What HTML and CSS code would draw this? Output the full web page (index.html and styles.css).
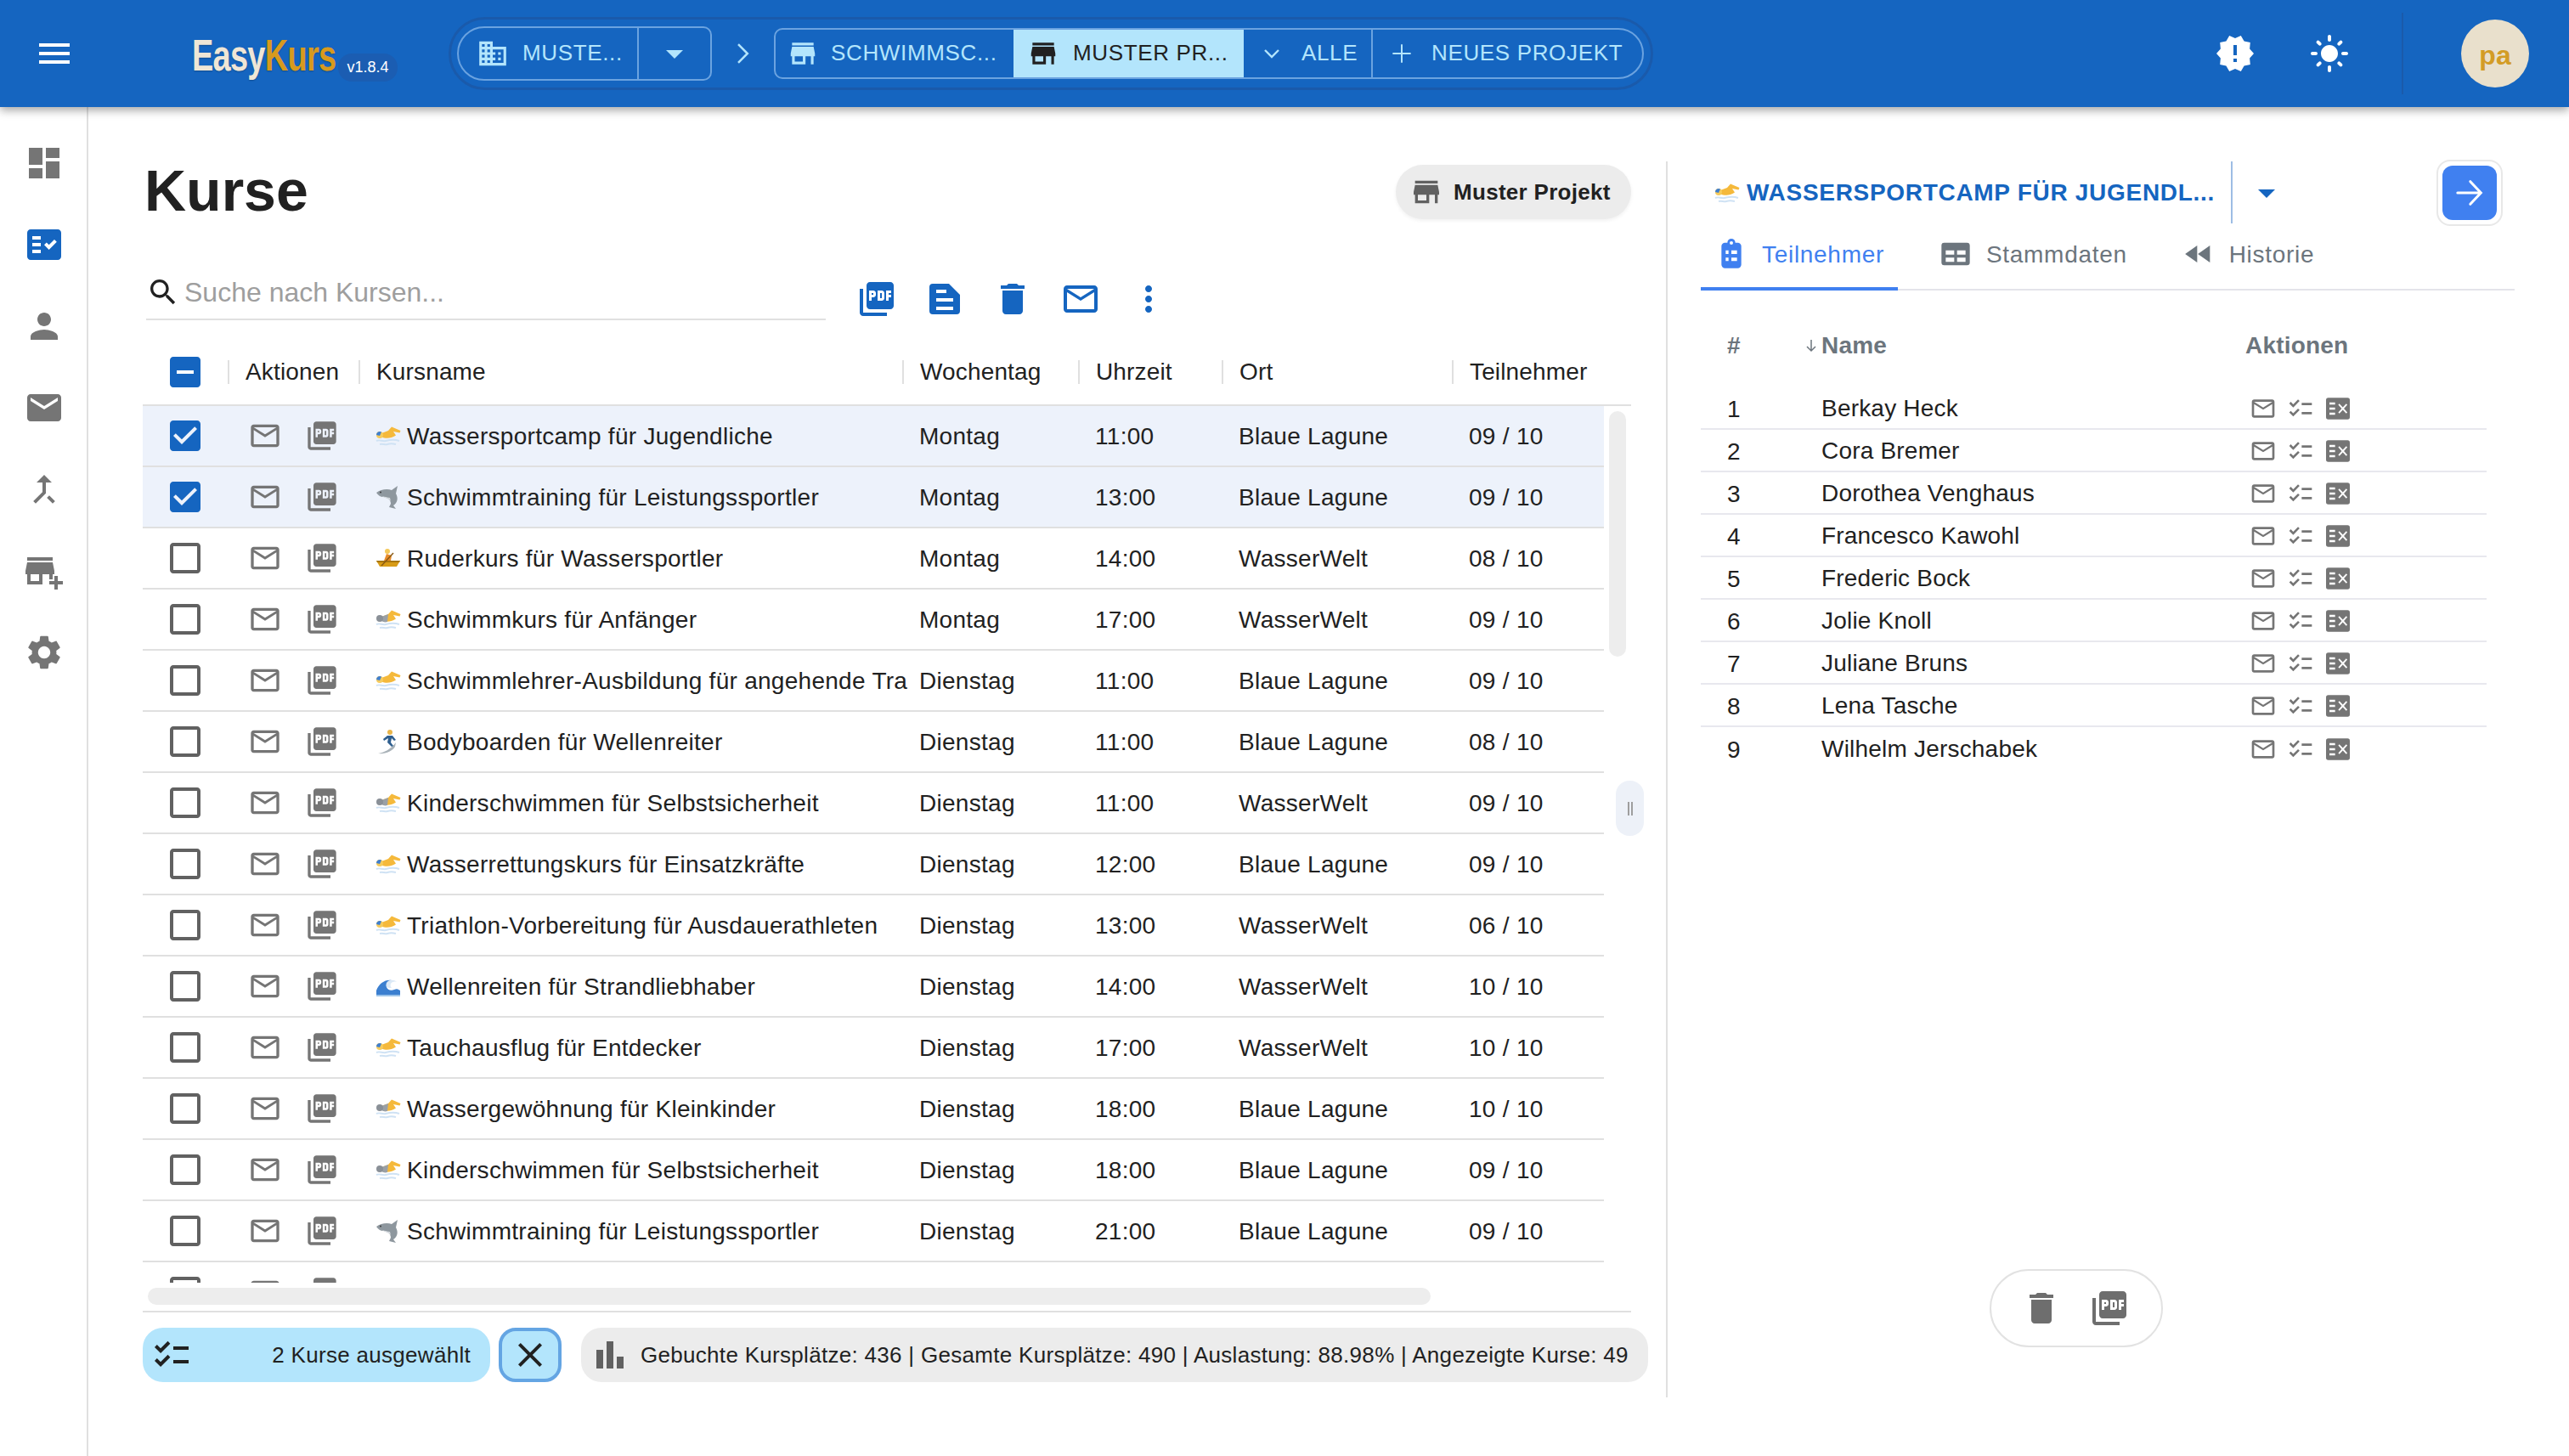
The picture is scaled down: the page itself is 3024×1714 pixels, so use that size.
FILE: index.html
```html
<!DOCTYPE html>
<html lang="de">
<head>
	<title>EasyKurs</title>
	<meta charset="utf-8">
	<link rel="stylesheet" href="styles.css">
</head>
<body>
<svg class="defs" xmlns="http://www.w3.org/2000/svg">
	<symbol id="menu" viewBox="0 0 24 24"><path d="M3 18h18v-2H3v2zm0-5h18v-2H3v2zm0-7v2h18V6H3z"/></symbol>
	<symbol id="dashboard" viewBox="0 0 24 24"><path d="M3 13h8V3H3v10zm0 8h8v-6H3v6zm10 0h8V11h-8v10zm0-18v6h8V3h-8z"/></symbol>
	<symbol id="fact" viewBox="0 0 24 24"><path d="M20 3H4c-1.1 0-2 .9-2 2v14c0 1.1.9 2 2 2h16c1.1 0 2-.9 2-2V5c0-1.1-.9-2-2-2zM10 17H5v-2h5v2zm0-4H5v-2h5v2zm0-4H5V7h5v2zm4.82 6L12 12.16l1.41-1.41 1.41 1.42L17.99 9l1.42 1.42L14.82 15z"/></symbol>
	<symbol id="person" viewBox="0 0 24 24"><path d="M12 12c2.21 0 4-1.79 4-4s-1.79-4-4-4-4 1.79-4 4 1.79 4 4 4zm0 2c-2.67 0-8 1.34-8 4v2h16v-2c0-2.66-5.33-4-8-4z"/></symbol>
	<symbol id="email" viewBox="0 0 24 24"><path d="M20 4H4c-1.1 0-1.99.9-1.99 2L2 18c0 1.1.9 2 2 2h16c1.1 0 2-.9 2-2V6c0-1.1-.9-2-2-2zm0 4l-8 5-8-5V6l8 5 8-5v2z"/></symbol>
	<symbol id="merge" viewBox="0 0 24 24"><path d="M17 20.41 18.41 19 15 15.59 13.59 17 17 20.41zM7.5 8H11v5.59L5.59 19 7 20.41l6-6V8h3.5L12 3.5 7.5 8z"/></symbol>
	<symbol id="addbiz" viewBox="0 0 24 24"><path d="M15 17h2v-3h1v-2l-1-5H2l-1 5v2h1v6h9v-6h4v3zm-6 1H4v-4h5v4zM2 4h15v2H2zM20 18v-3h-2v3h-3v2h3v3h2v-3h3v-2z"/></symbol>
	<symbol id="settings" viewBox="0 0 24 24"><path d="M19.14 12.94c.04-.3.06-.61.06-.94 0-.32-.02-.64-.07-.94l2.03-1.58c.18-.14.23-.41.12-.61l-1.92-3.32c-.12-.22-.37-.29-.59-.22l-2.39.96c-.5-.38-1.03-.7-1.62-.94l-.36-2.54c-.04-.24-.24-.41-.48-.41h-3.84c-.24 0-.43.17-.47.41l-.36 2.54c-.59.24-1.13.57-1.62.94l-2.39-.96c-.22-.08-.47 0-.59.22L2.74 8.87c-.12.21-.08.47.12.61l2.03 1.58c-.05.3-.09.63-.09.94s.02.64.07.94l-2.03 1.58c-.18.14-.23.41-.12.61l1.92 3.32c.12.22.37.29.59.22l2.39-.96c.5.38 1.03.7 1.62.94l.36 2.54c.05.24.24.41.48.41h3.84c.24 0 .44-.17.47-.41l.36-2.54c.59-.24 1.13-.56 1.62-.94l2.39.96c.22.08.47 0 .59-.22l1.92-3.32c.12-.22.07-.47-.12-.61l-2.01-1.58zM12 15.6c-1.98 0-3.6-1.62-3.6-3.6s1.62-3.6 3.6-3.6 3.6 1.62 3.6 3.6-1.62 3.6-3.6 3.6z"/></symbol>
	<symbol id="store" viewBox="0 0 24 24"><path d="M20 4H4v2h16V4zm1 10v-2l-1-5H4l-1 5v2h1v6h10v-6h4v6h2v-6h1zm-9 4H6v-4h6v4z"/></symbol>
	<symbol id="domain" viewBox="0 0 24 24"><path d="M12 7V3H2v18h20V7H12zM6 19H4v-2h2v2zm0-4H4v-2h2v2zm0-4H4V9h2v2zm0-4H4V5h2v2zm4 12H8v-2h2v2zm0-4H8v-2h2v2zm0-4H8V9h2v2zm0-4H8V5h2v2zm10 12h-8v-2h2v-2h-2v-2h2v-2h-2V9h8v10zm-2-8h-2v2h2v-2zm0 4h-2v2h2v-2z"/></symbol>
	<symbol id="drop" viewBox="0 0 24 24"><path d="M7 10l5 5 5-5z"/></symbol>
	<symbol id="chev" viewBox="0 0 24 24"><path d="M9 5.5l6.5 6.5L9 18.500" fill="none" stroke="currentColor" stroke-width="1.500"/></symbol>
	<symbol id="chevdown" viewBox="0 0 24 24"><path d="M6 9l6 6 6-6" fill="none" stroke="currentColor" stroke-width="1.800"/></symbol>
	<symbol id="plus" viewBox="0 0 24 24"><path d="M12 4v16M4 12h16" fill="none" stroke="currentColor" stroke-width="1.500"/></symbol>
	<symbol id="pdf" viewBox="0 0 24 24"><path d="M20 2H8c-1.1 0-2 .9-2 2v12c0 1.1.9 2 2 2h12c1.1 0 2-.9 2-2V4c0-1.1-.9-2-2-2zm-8.500 7.500c0 .83-.67 1.500-1.500 1.500H9v2H7.500V7H10c.83 0 1.500.67 1.500 1.500v1zm5 2c0 .83-.67 1.500-1.500 1.500h-2.500V7H15c.83 0 1.500.67 1.500 1.500v3zm4-3H19v1h1.500V11H19v2h-1.500V7h3v1.500zM9 9.500h1v-1H9v1zM4 6H2v14c0 1.100.9 2 2 2h14v-2H4V6zm10 5.500h1v-3h-1v3z"/></symbol>
	<symbol id="doc" viewBox="0 0 24 24"><path fill-rule="evenodd" d="M5 3h9.500L21 9.500V19a2 2 0 0 1-2 2H5a2 2 0 0 1-2-2V5a2 2 0 0 1 2-2zm2 3.500v2h6v-2zm0 5v2h10v-2zm0 5v2h10v-2z"/></symbol>
	<symbol id="trash" viewBox="0 0 24 24"><path d="M6 19c0 1.100.9 2 2 2h8c1.100 0 2-.9 2-2V7H6v12zM19 4h-3.500l-1-1h-5l-1 1H5v2h14V4z"/></symbol>
	<symbol id="mail" viewBox="0 0 24 24"><path d="M20 4H4c-1.100 0-1.990.9-1.990 2L2 18c0 1.100.9 2 2 2h16c1.100 0 2-.9 2-2V6c0-1.100-.9-2-2-2zm0 14H4V8l8 5 8-5v10zm-8-7L4 6h16l-8 5z"/></symbol>
	<symbol id="more" viewBox="0 0 24 24"><path d="M12 8c1.100 0 2-.9 2-2s-.9-2-2-2-2 .9-2 2 .9 2 2 2zm0 2c-1.100 0-2 .9-2 2s.9 2 2 2 2-.9 2-2-.9-2-2-2zm0 6c-1.100 0-2 .9-2 2s.9 2 2 2 2-.9 2-2-.9-2-2-2z"/></symbol>
	<symbol id="search" viewBox="0 0 24 24"><path d="M15.500 14h-.79l-.28-.27C15.410 12.590 16 11.110 16 9.500 16 5.910 13.090 3 9.500 3S3 5.910 3 9.500 5.910 16 9.500 16c1.610 0 3.090-.59 4.230-1.570l.27.28v.79l5 4.990L20.490 19l-4.990-5zm-6 0C7.010 14 5 11.990 5 9.500S7.010 5 9.500 5 14 7.010 14 9.500 11.990 14 9.500 14z"/></symbol>
	<symbol id="cb-on" viewBox="0 0 24 24"><path d="M19 3H5c-1.110 0-2 .9-2 2v14c0 1.100.89 2 2 2h14c1.110 0 2-.9 2-2V5c0-1.100-.89-2-2-2zm-9 14l-5-5 1.410-1.410L10 14.170l7.590-7.590L19 8l-9 9z"/></symbol>
	<symbol id="cb-off" viewBox="0 0 24 24"><path d="M19 5v14H5V5h14m0-2H5c-1.100 0-2 .9-2 2v14c0 1.100.9 2 2 2h14c1.100 0 2-.9 2-2V5c0-1.100-.9-2-2-2z"/></symbol>
	<symbol id="cb-some" viewBox="0 0 24 24"><path d="M19 3H5c-1.100 0-2 .9-2 2v14c0 1.100.9 2 2 2h14c1.100 0 2-.9 2-2V5c0-1.100-.9-2-2-2zm-2 10H7v-2h10v2z"/></symbol>
	<symbol id="alert" viewBox="0 0 24 24"><path d="M23 12l-2.440-2.780.34-3.680-3.610-.82-1.890-3.180L12 3 8.600 1.540 6.710 4.720l-3.610.81.34 3.680L1 12l2.440 2.780-.34 3.690 3.610.82 1.890 3.180L12 21l3.400 1.460 1.890-3.180 3.610-.82-.34-3.680L23 12zm-10 5h-2v-2h2v2zm0-4h-2V7h2v6z"/></symbol>
	<symbol id="sun" viewBox="0 0 24 24"><path d="M12 7c-2.760 0-5 2.240-5 5s2.240 5 5 5 5-2.240 5-5-2.240-5-5-5zM2 13h2c.55 0 1-.45 1-1s-.45-1-1-1H2c-.55 0-1 .45-1 1s.45 1 1 1zm18 0h2c.55 0 1-.45 1-1s-.45-1-1-1h-2c-.55 0-1 .45-1 1s.45 1 1 1zM11 2v2c0 .55.45 1 1 1s1-.45 1-1V2c0-.55-.45-1-1-1s-1 .45-1 1zm0 18v2c0 .55.45 1 1 1s1-.45 1-1v-2c0-.55-.45-1-1-1s-1 .45-1 1zM5.990 4.580c-.39-.39-1.030-.39-1.410 0-.39.39-.39 1.030 0 1.410l1.060 1.060c.39.39 1.030.39 1.410 0s.39-1.030 0-1.410L5.990 4.580zm12.370 12.370c-.39-.39-1.030-.39-1.410 0-.39.39-.39 1.030 0 1.410l1.060 1.060c.39.39 1.030.39 1.410 0 .39-.39.39-1.030 0-1.410l-1.060-1.060zm1.060-10.960c.39-.39.39-1.030 0-1.410-.39-.39-1.030-.39-1.410 0l-1.060 1.060c-.39.39-.39 1.030 0 1.410s1.030.39 1.410 0l1.060-1.060zM7.050 18.360c.39-.39.39-1.030 0-1.410-.39-.39-1.030-.39-1.410 0l-1.060 1.060c-.39.39-.39 1.030 0 1.410s1.030.39 1.410 0l1.060-1.060z"/></symbol>
	<symbol id="checklist" viewBox="0 0 24 24"><path d="M22 7h-9v2h9V7zm0 8h-9v2h9v-2zM5.540 11L2 7.460l1.410-1.410 2.120 2.120 4.240-4.240 1.410 1.410L5.540 11zm0 8L2 15.460l1.410-1.410 2.120 2.120 4.240-4.240 1.410 1.410L5.540 19z"/></symbol>
	<symbol id="rulex" viewBox="0 0 24 24"><path fill-rule="evenodd" d="M3.500 2.500h17a2 2 0 0 1 2 2v15a2 2 0 0 1-2 2h-17a2 2 0 0 1-2-2v-15a2 2 0 0 1 2-2zM4.500 6.500v2h5v-2zm0 4.500v2h5v-2zm0 4.500v2h5v-2zM13.300 7.600l-1 1 3 3.400-3 3.400 1 1 3-3.300 3 3.300 1-1-3-3.400 3-3.400-1-1-3 3.300z"/></symbol>
	<symbol id="close" viewBox="0 0 24 24"><path d="M19 6.410L17.590 5 12 10.590 6.410 5 5 6.410 10.590 12 5 17.590 6.410 19 12 13.410 17.590 19 19 17.590 13.410 12z"/></symbol>
	<symbol id="bars" viewBox="0 0 24 24"><path d="M4 9h4v11H4zM16 13h4v7h-4zM10 4h4v16h-4z"/></symbol>
	<symbol id="arrow" viewBox="0 0 24 24"><path d="M3.500 12h16M12.500 4l7.500 8-7.500 8" fill="none" stroke="currentColor" stroke-width="1.800" stroke-linecap="round"/></symbol>
	<symbol id="down" viewBox="0 0 16 16"><path d="M8 1v13M3 9l5 5 5-5" fill="none" stroke="currentColor" stroke-width="1.500"/></symbol>
	<symbol id="clip" viewBox="0 0 24 24"><path fill-rule="evenodd" d="M16.500 4H14.800a2.800 2.800 0 0 0-5.600 0H7.500A2.500 2.500 0 0 0 5 6.500v13A2.500 2.500 0 0 0 7.500 22h9a2.500 2.500 0 0 0 2.500-2.500v-13A2.500 2.500 0 0 0 16.500 4zM12 3a1.200 1.200 0 1 1 0 2.400A1.200 1.200 0 0 1 12 3zM8 9.500v2.500h2V9.500zM12 9.500v2.500h4V9.500zM8 14.500V17h2v-2.500zM12 14.500V17h4v-2.500z"/></symbol>
	<symbol id="table" viewBox="0 0 24 24"><path fill-rule="evenodd" d="M4 4h16a2 2 0 0 1 2 2v12a2 2 0 0 1-2 2H4a2 2 0 0 1-2-2V6a2 2 0 0 1 2-2zM5 9.500v3h6v-3zM13 9.500v3h6v-3zM5 14.500v3h6v-3zM13 14.500v3h6v-3z"/></symbol>
	<symbol id="rewind" viewBox="0 0 24 24"><path d="M11 18V6l-8.500 6 8.500 6zm.5-6l8.500 6V6l-8.500 6z"/></symbol>
	<symbol id="e-swim" viewBox="0 0 30 30">
		<path d="M1 21c4-2 7 1 11 0s10-2 16 0M5 25c4-1 6 1 9 0s6-1 10 0" fill="none" stroke="#cfe2f4" stroke-width="2"/>
		<path d="M7 12l8-3 4-4.500 10.500 4.500-1 2.500-7.500-1.500 3 4.500c-6 4-12 4-17 2z" fill="#f5b93b"/>
		<circle cx="5" cy="14" r="4" fill="#f6cb5c"/>
		<path d="M1 14a4 4 0 0 1 6-3.500l-2 4.500z" fill="#3f7fcf"/>
	</symbol>
	<symbol id="e-swimgrey" viewBox="0 0 30 30">
		<path d="M1 21c4-2 7 1 11 0s10-2 16 0M5 25c4-1 6 1 9 0s6-1 10 0" fill="none" stroke="#cfe2f4" stroke-width="2"/>
		<path d="M7 12l8-3 4-4.500 10.500 4.500-1 2.500-7.500-1.500 3 4.500c-6 4-12 4-17 2z" fill="#f5b93b"/>
		<path d="M7 12l8-3-1 9c-3 1-5 0-7-1z" fill="#9aa0a6"/>
		<circle cx="5" cy="14" r="4" fill="#8a9097"/>
	</symbol>
	<symbol id="e-shark" viewBox="0 0 30 30">
		<path d="M1 10c5-4 13-5 18-3l7-5-2 9c3 5 2 11-3 14l3 4-8-2 2-4c0-5-4-8-9-8-3 0-6-2-8-5z" fill="#8e979e"/>
		<path d="M4 12c4 3 9 3 13 4l1 4c-2-3-8-4-14-8z" fill="#d5dade"/>
		<circle cx="6" cy="9.500" r=".9" fill="#333"/>
	</symbol>
	<symbol id="e-row" viewBox="0 0 30 30">
		<path d="M1 18h28l-4 7H5z" fill="#d89b16"/>
		<path d="M1 18h28l-1 2H2z" fill="#a8760e"/>
		<path d="M10 18l3-8 6 2-1 6z" fill="#e88a2a"/>
		<circle cx="14" cy="7" r="3" fill="#f4c95a"/>
		<path d="M7 24L21 9" stroke="#8a5a14" stroke-width="1.500"/>
	</symbol>
	<symbol id="e-surf" viewBox="0 0 30 30">
		<path d="M3 29c7-1 15-5 21-13l-1 5c-3 5-11 9-20 8z" fill="#a9b2b8"/>
		<circle cx="17" cy="4" r="3" fill="#e8b54a"/>
		<path d="M14 8l6 0 4 5-2 1-3-3-1 5 3 4-2 1-5-5 1-5-5 3-1-2z" fill="#2f5f8f"/>
	</symbol>
	<symbol id="e-wave" viewBox="0 0 30 30">
		<path d="M1 27V20c3-8 10-13 18-12-5 1-7 5-6 8s5 5 9 3 5 0 7 1v7z" fill="#3b7fd0"/>
		<path d="M13 16c-2-6 3-9 8-8 2 0 3 1 4 2-3-1-6 0-7 2s0 4 1 5c-2 0-4 0-6-1z" fill="#dbe9f6"/>
		<path d="M1 25h28v2H1z" fill="#9cc4ea"/>
	</symbol>
</svg>

<header class="topbar">
	<svg class="ic s48 burger"><use href="#menu"/></svg>
	<div class="logo"><span class="logo-easy">Easy</span><span class="logo-kurs">Kurs</span></div>
	<div class="version">v1.8.4</div>
	<nav class="crumbs">
		<div class="group group-org">
			<div class="tbtn tbtn-org"><svg class="ic s38"><use href="#domain"/></svg><span>MUSTE...</span></div>
			<div class="tbtn tbtn-drop"><svg class="ic s48"><use href="#drop"/></svg></div>
		</div>
		<svg class="ic s40 crumb-sep"><use href="#chev"/></svg>
		<div class="group group-projects">
			<div class="tbtn tbtn-a"><svg class="ic s38"><use href="#store"/></svg><span>SCHWIMMSC...</span></div>
			<div class="tbtn tbtn-b active"><svg class="ic s38"><use href="#store"/></svg><span>MUSTER PR...</span></div>
			<div class="tbtn tbtn-c"><svg class="ic s32"><use href="#chevdown"/></svg><span>ALLE</span></div>
			<div class="tbtn tbtn-d"><svg class="ic s32"><use href="#plus"/></svg><span>NEUES PROJEKT</span></div>
		</div>
	</nav>
	<div class="top-right">
		<svg class="ic s48"><use href="#alert"/></svg>
		<svg class="ic s48 sun"><use href="#sun"/></svg>
		<div class="top-sep"></div>
		<div class="avatar">pa</div>
	</div>
</header>

<div class="page">
	<aside class="rail">
		<svg class="ic s48"><use href="#dashboard"/></svg>
		<svg class="ic s48 on"><use href="#fact"/></svg>
		<svg class="ic s48"><use href="#person"/></svg>
		<svg class="ic s48"><use href="#email"/></svg>
		<svg class="ic s48"><use href="#merge"/></svg>
		<svg class="ic s48"><use href="#addbiz"/></svg>
		<svg class="ic s48"><use href="#settings"/></svg>
	</aside>

	<main class="left">
		<div class="title-row">
			<h1>Kurse</h1>
			<div class="project-chip"><svg class="ic s40"><use href="#store"/></svg><span>Muster Projekt</span></div>
		</div>
		<div class="toolbar">
			<div class="search">
				<svg class="ic s40"><use href="#search"/></svg>
				<span>Suche nach Kursen...</span>
			</div>
			<div class="tools">
				<svg class="ic s48"><use href="#pdf"/></svg>
				<svg class="ic s48"><use href="#doc"/></svg>
				<svg class="ic s48"><use href="#trash"/></svg>
				<svg class="ic s48"><use href="#mail"/></svg>
				<svg class="ic s48"><use href="#more"/></svg>
			</div>
		</div>

		<div class="table">
			<div class="thead">
				<div class="hcheck"><svg class="ic s48 blue"><use href="#cb-some"/></svg></div>
				<div class="hcell">Aktionen</div>
				<div class="hcell">Kursname</div>
				<div class="hcell">Wochentag</div>
				<div class="hcell">Uhrzeit</div>
				<div class="hcell">Ort</div>
				<div class="hcell">Teilnehmer</div>
			</div>
			<div class="tbody">
				<div class="row selected">
					<div class="c-check"><svg class="ic s48 blue"><use href="#cb-on"/></svg></div>
					<div class="c-act"><svg class="ic s40"><use href="#mail"/></svg><svg class="ic s40"><use href="#pdf"/></svg></div>
					<div class="c-name"><svg class="emoji"><use href="#e-swim"/></svg><span>Wassersportcamp für Jugendliche</span></div>
					<div class="cell">Montag</div><div class="cell">11:00</div><div class="cell">Blaue Lagune</div><div class="cell">09 / 10</div>
				</div>
				<div class="row selected">
					<div class="c-check"><svg class="ic s48 blue"><use href="#cb-on"/></svg></div>
					<div class="c-act"><svg class="ic s40"><use href="#mail"/></svg><svg class="ic s40"><use href="#pdf"/></svg></div>
					<div class="c-name"><svg class="emoji"><use href="#e-shark"/></svg><span>Schwimmtraining für Leistungssportler</span></div>
					<div class="cell">Montag</div><div class="cell">13:00</div><div class="cell">Blaue Lagune</div><div class="cell">09 / 10</div>
				</div>
				<div class="row">
					<div class="c-check"><svg class="ic s48"><use href="#cb-off"/></svg></div>
					<div class="c-act"><svg class="ic s40"><use href="#mail"/></svg><svg class="ic s40"><use href="#pdf"/></svg></div>
					<div class="c-name"><svg class="emoji"><use href="#e-row"/></svg><span>Ruderkurs für Wassersportler</span></div>
					<div class="cell">Montag</div><div class="cell">14:00</div><div class="cell">WasserWelt</div><div class="cell">08 / 10</div>
				</div>
				<div class="row">
					<div class="c-check"><svg class="ic s48"><use href="#cb-off"/></svg></div>
					<div class="c-act"><svg class="ic s40"><use href="#mail"/></svg><svg class="ic s40"><use href="#pdf"/></svg></div>
					<div class="c-name"><svg class="emoji"><use href="#e-swimgrey"/></svg><span>Schwimmkurs für Anfänger</span></div>
					<div class="cell">Montag</div><div class="cell">17:00</div><div class="cell">WasserWelt</div><div class="cell">09 / 10</div>
				</div>
				<div class="row">
					<div class="c-check"><svg class="ic s48"><use href="#cb-off"/></svg></div>
					<div class="c-act"><svg class="ic s40"><use href="#mail"/></svg><svg class="ic s40"><use href="#pdf"/></svg></div>
					<div class="c-name"><svg class="emoji"><use href="#e-swim"/></svg><span>Schwimmlehrer-Ausbildung für angehende Tra</span></div>
					<div class="cell">Dienstag</div><div class="cell">11:00</div><div class="cell">Blaue Lagune</div><div class="cell">09 / 10</div>
				</div>
				<div class="row">
					<div class="c-check"><svg class="ic s48"><use href="#cb-off"/></svg></div>
					<div class="c-act"><svg class="ic s40"><use href="#mail"/></svg><svg class="ic s40"><use href="#pdf"/></svg></div>
					<div class="c-name"><svg class="emoji"><use href="#e-surf"/></svg><span>Bodyboarden für Wellenreiter</span></div>
					<div class="cell">Dienstag</div><div class="cell">11:00</div><div class="cell">Blaue Lagune</div><div class="cell">08 / 10</div>
				</div>
				<div class="row">
					<div class="c-check"><svg class="ic s48"><use href="#cb-off"/></svg></div>
					<div class="c-act"><svg class="ic s40"><use href="#mail"/></svg><svg class="ic s40"><use href="#pdf"/></svg></div>
					<div class="c-name"><svg class="emoji"><use href="#e-swimgrey"/></svg><span>Kinderschwimmen für Selbstsicherheit</span></div>
					<div class="cell">Dienstag</div><div class="cell">11:00</div><div class="cell">WasserWelt</div><div class="cell">09 / 10</div>
				</div>
				<div class="row">
					<div class="c-check"><svg class="ic s48"><use href="#cb-off"/></svg></div>
					<div class="c-act"><svg class="ic s40"><use href="#mail"/></svg><svg class="ic s40"><use href="#pdf"/></svg></div>
					<div class="c-name"><svg class="emoji"><use href="#e-swim"/></svg><span>Wasserrettungskurs für Einsatzkräfte</span></div>
					<div class="cell">Dienstag</div><div class="cell">12:00</div><div class="cell">Blaue Lagune</div><div class="cell">09 / 10</div>
				</div>
				<div class="row">
					<div class="c-check"><svg class="ic s48"><use href="#cb-off"/></svg></div>
					<div class="c-act"><svg class="ic s40"><use href="#mail"/></svg><svg class="ic s40"><use href="#pdf"/></svg></div>
					<div class="c-name"><svg class="emoji"><use href="#e-swim"/></svg><span>Triathlon-Vorbereitung für Ausdauerathleten</span></div>
					<div class="cell">Dienstag</div><div class="cell">13:00</div><div class="cell">WasserWelt</div><div class="cell">06 / 10</div>
				</div>
				<div class="row">
					<div class="c-check"><svg class="ic s48"><use href="#cb-off"/></svg></div>
					<div class="c-act"><svg class="ic s40"><use href="#mail"/></svg><svg class="ic s40"><use href="#pdf"/></svg></div>
					<div class="c-name"><svg class="emoji"><use href="#e-wave"/></svg><span>Wellenreiten für Strandliebhaber</span></div>
					<div class="cell">Dienstag</div><div class="cell">14:00</div><div class="cell">WasserWelt</div><div class="cell">10 / 10</div>
				</div>
				<div class="row">
					<div class="c-check"><svg class="ic s48"><use href="#cb-off"/></svg></div>
					<div class="c-act"><svg class="ic s40"><use href="#mail"/></svg><svg class="ic s40"><use href="#pdf"/></svg></div>
					<div class="c-name"><svg class="emoji"><use href="#e-swim"/></svg><span>Tauchausflug für Entdecker</span></div>
					<div class="cell">Dienstag</div><div class="cell">17:00</div><div class="cell">WasserWelt</div><div class="cell">10 / 10</div>
				</div>
				<div class="row">
					<div class="c-check"><svg class="ic s48"><use href="#cb-off"/></svg></div>
					<div class="c-act"><svg class="ic s40"><use href="#mail"/></svg><svg class="ic s40"><use href="#pdf"/></svg></div>
					<div class="c-name"><svg class="emoji"><use href="#e-swimgrey"/></svg><span>Wassergewöhnung für Kleinkinder</span></div>
					<div class="cell">Dienstag</div><div class="cell">18:00</div><div class="cell">Blaue Lagune</div><div class="cell">10 / 10</div>
				</div>
				<div class="row">
					<div class="c-check"><svg class="ic s48"><use href="#cb-off"/></svg></div>
					<div class="c-act"><svg class="ic s40"><use href="#mail"/></svg><svg class="ic s40"><use href="#pdf"/></svg></div>
					<div class="c-name"><svg class="emoji"><use href="#e-swimgrey"/></svg><span>Kinderschwimmen für Selbstsicherheit</span></div>
					<div class="cell">Dienstag</div><div class="cell">18:00</div><div class="cell">Blaue Lagune</div><div class="cell">09 / 10</div>
				</div>
				<div class="row">
					<div class="c-check"><svg class="ic s48"><use href="#cb-off"/></svg></div>
					<div class="c-act"><svg class="ic s40"><use href="#mail"/></svg><svg class="ic s40"><use href="#pdf"/></svg></div>
					<div class="c-name"><svg class="emoji"><use href="#e-shark"/></svg><span>Schwimmtraining für Leistungssportler</span></div>
					<div class="cell">Dienstag</div><div class="cell">21:00</div><div class="cell">Blaue Lagune</div><div class="cell">09 / 10</div>
				</div>
				<div class="row">
					<div class="c-check"><svg class="ic s48"><use href="#cb-off"/></svg></div>
					<div class="c-act"><svg class="ic s40"><use href="#mail"/></svg><svg class="ic s40"><use href="#pdf"/></svg></div>
				</div>
				<div class="vscroll"></div>
			</div>
			<div class="hscroll"></div>
		</div>

		<div class="footer">
			<div class="chip chip-selected">
				<svg class="ic s48"><use href="#checklist"/></svg>
				<span>2 Kurse ausgewählt</span>
			</div>
			<div class="chip-close"><svg class="ic s48"><use href="#close"/></svg></div>
			<div class="chip chip-stats">
				<svg class="ic s48"><use href="#bars"/></svg>
				<span>Gebuchte Kursplätze: 436 | Gesamte Kursplätze: 490 | Auslastung: 88.98% | Angezeigte Kurse: 49</span>
			</div>
		</div>
		<div class="splitter"><i></i><i></i></div>
	</main>

	<section class="right">
		<div class="detail-head">
			<svg class="emoji"><use href="#e-swim"/></svg>
			<div class="detail-title">WASSERSPORTCAMP FÜR JUGENDL...</div>
			<div class="detail-sep"></div>
			<svg class="ic s48 blue"><use href="#drop"/></svg>
			<div class="next-btn"><div><svg class="ic s40"><use href="#arrow"/></svg></div></div>
		</div>
		<div class="tabs">
			<div class="tab active"><svg class="ic s40"><use href="#clip"/></svg><span>Teilnehmer</span></div>
			<div class="tab"><svg class="ic s40"><use href="#table"/></svg><span>Stammdaten</span></div>
			<div class="tab"><svg class="ic s40"><use href="#rewind"/></svg><span>Historie</span></div>
		</div>
		<div class="members">
			<div class="mhead">
				<div class="mnum">#</div>
				<div class="mname"><svg class="sort"><use href="#down"/></svg>Name</div>
				<div class="mact-head">Aktionen</div>
			</div>
			<div class="mrow"><div class="mnum">1</div><div>Berkay Heck</div><div class="mact"><svg class="ic s32"><use href="#mail"/></svg><svg class="ic s32"><use href="#checklist"/></svg><svg class="ic s32"><use href="#rulex"/></svg></div></div>
			<div class="mrow"><div class="mnum">2</div><div>Cora Bremer</div><div class="mact"><svg class="ic s32"><use href="#mail"/></svg><svg class="ic s32"><use href="#checklist"/></svg><svg class="ic s32"><use href="#rulex"/></svg></div></div>
			<div class="mrow"><div class="mnum">3</div><div>Dorothea Venghaus</div><div class="mact"><svg class="ic s32"><use href="#mail"/></svg><svg class="ic s32"><use href="#checklist"/></svg><svg class="ic s32"><use href="#rulex"/></svg></div></div>
			<div class="mrow"><div class="mnum">4</div><div>Francesco Kawohl</div><div class="mact"><svg class="ic s32"><use href="#mail"/></svg><svg class="ic s32"><use href="#checklist"/></svg><svg class="ic s32"><use href="#rulex"/></svg></div></div>
			<div class="mrow"><div class="mnum">5</div><div>Frederic Bock</div><div class="mact"><svg class="ic s32"><use href="#mail"/></svg><svg class="ic s32"><use href="#checklist"/></svg><svg class="ic s32"><use href="#rulex"/></svg></div></div>
			<div class="mrow"><div class="mnum">6</div><div>Jolie Knoll</div><div class="mact"><svg class="ic s32"><use href="#mail"/></svg><svg class="ic s32"><use href="#checklist"/></svg><svg class="ic s32"><use href="#rulex"/></svg></div></div>
			<div class="mrow"><div class="mnum">7</div><div>Juliane Bruns</div><div class="mact"><svg class="ic s32"><use href="#mail"/></svg><svg class="ic s32"><use href="#checklist"/></svg><svg class="ic s32"><use href="#rulex"/></svg></div></div>
			<div class="mrow"><div class="mnum">8</div><div>Lena Tasche</div><div class="mact"><svg class="ic s32"><use href="#mail"/></svg><svg class="ic s32"><use href="#checklist"/></svg><svg class="ic s32"><use href="#rulex"/></svg></div></div>
			<div class="mrow last"><div class="mnum">9</div><div>Wilhelm Jerschabek</div><div class="mact"><svg class="ic s32"><use href="#mail"/></svg><svg class="ic s32"><use href="#checklist"/></svg><svg class="ic s32"><use href="#rulex"/></svg></div></div>
		</div>
		<div class="fab">
			<svg class="ic s48"><use href="#trash"/></svg>
			<svg class="ic s48"><use href="#pdf"/></svg>
		</div>
	</section>
</div>
</body>
</html>
```

FILE: styles.css
```css
* {
	box-sizing: border-box;
}
html, body {
	margin: 0;
	padding: 0;
}
body {
	width: 3024px;
	height: 1714px;
	overflow: hidden;
	background: #fff;
	color: #212121;
	font-family: "Liberation Sans", Arial, sans-serif;
	font-size: 28px;
}
.defs {
	display: none;
}
.ic {
	display: block;
	flex: none;
	fill: currentColor;
}
.s32 { width: 32px; height: 32px; }
.s38 { width: 38px; height: 38px; }
.s40 { width: 40px; height: 40px; }
.s48 { width: 48px; height: 48px; }
.blue { color: #1565c0; }
.emoji {
	display: block;
	flex: none;
	width: 30px;
	height: 30px;
}

/* top bar */
.topbar {
	position: relative;
	z-index: 5;
	display: flex;
	align-items: center;
	height: 126px;
	padding-left: 40px;
	background: #1565c0;
	color: #fff;
	box-shadow: 0 4px 10px rgba(0,0,0,0.35);
}
.logo {
	width: 232px;
	margin: 4px -60px 0 138px;
	font-size: 52px;
	font-weight: 700;
	letter-spacing: -1px;
	line-height: 56px;
	white-space: nowrap;
	text-shadow: 0 1px 2px rgba(0,0,0,0.25);
	transform: scaleX(0.73);
	transform-origin: left center;
}
.logo-easy { color: #efe6d6; }
.logo-kurs { color: #d79a1e; }
.version {
	align-self: flex-start;
	margin-top: 63px;
	width: 70px;
	height: 33px;
	line-height: 33px;
	text-align: center;
	font-size: 18px;
	border-radius: 16px;
	background: #1b5db2;
}
.crumbs {
	display: flex;
	align-items: center;
	margin-left: 60px;
	width: 1418px;
	height: 86px;
	padding-left: 7px;
	border: 3px solid #1a5aab;
	border-radius: 43px;
}
.group {
	display: flex;
	align-items: stretch;
	border: 2px solid #6ba3e0;
	color: #b3e5fc;
	overflow: hidden;
}
.group-org {
	width: 300px;
	height: 64px;
	border-radius: 32px 10px 10px 32px;
}
.group-projects {
	width: 1024px;
	height: 60px;
	border-radius: 10px 30px 30px 10px;
}
.crumb-sep {
	margin: 0 17px 0 16px;
	color: #b3e5fc;
}
.tbtn {
	display: flex;
	align-items: center;
	font-size: 26px;
	letter-spacing: 0.65px;
	white-space: nowrap;
}
.tbtn span {
	margin-top: -2px;
}
.tbtn-org {
	width: 212px;
	padding-left: 21px;
	gap: 16px;
	border-right: 2px solid #6ba3e0;
}
.tbtn-drop {
	flex: 1;
	justify-content: center;
}
.tbtn-a {
	width: 280px;
	padding-left: 13px;
	gap: 14px;
}
.tbtn-b {
	width: 271px;
	padding-left: 16px;
	gap: 16px;
}
.tbtn-c {
	width: 152px;
	padding-left: 17px;
	gap: 19px;
	border-right: 2px solid #6ba3e0;
}
.tbtn-d {
	flex: 1;
	padding-left: 18px;
	gap: 19px;
}
.tbtn.active {
	background: #b3e5fc;
	color: #212121;
}
.top-right {
	display: flex;
	align-items: center;
	margin-left: auto;
	height: 100%;
}
.top-right .sun {
	margin-left: 63px;
}
.top-sep {
	width: 2px;
	height: 96px;
	margin-left: 61px;
	background: #1a5aab;
}
.avatar {
	width: 80px;
	height: 80px;
	margin: 0 47px 0 68px;
	border-radius: 50%;
	background: #e9e0cc;
	color: #d39c26;
	font-size: 32px;
	font-weight: 700;
	line-height: 84px;
	text-align: center;
}

/* page */
.page {
	display: flex;
	height: 1588px;
}
.rail {
	display: flex;
	flex-direction: column;
	align-items: center;
	gap: 48px;
	width: 104px;
	padding: 42px 0 0 2px;
	border-right: 2px solid #e0e0e0;
	color: #757575;
}
.rail .on {
	color: #1565c0;
}

/* left panel */
.left {
	position: relative;
	width: 1859px;
	height: 1455px;
	margin-top: 64px;
	padding: 4px 41px 0 64px;
	border-right: 2px solid #e0e0e0;
}
.title-row {
	display: flex;
	align-items: center;
	justify-content: space-between;
	height: 64px;
}
h1 {
	margin: -4px 0 0 2px;
	font-size: 68px;
	line-height: 64px;
	font-weight: 700;
}
.project-chip {
	display: flex;
	align-items: center;
	gap: 12px;
	width: 277px;
	height: 64px;
	padding-left: 16px;
	border-radius: 32px;
	background: #ececec;
	box-shadow: 0 2px 4px rgba(0,0,0,0.06);
	font-size: 26px;
	font-weight: 700;
	letter-spacing: 0.3px;
}
.project-chip .ic {
	color: #616161;
}
.toolbar {
	display: flex;
	align-items: flex-end;
	height: 119px;
	padding-left: 4px;
}
.search {
	display: flex;
	align-items: center;
	gap: 5px;
	width: 800px;
	height: 64px;
	border-bottom: 2px solid #e0e0e0;
	color: #9e9e9e;
	font-size: 32px;
}
.search .ic {
	color: #212121;
}
.tools {
	display: flex;
	gap: 32px;
	margin: 0 0 1px 36px;
	color: #1565c0;
}

/* course table */
.table {
	border-bottom: 2px solid #e0e0e0;
	padding-bottom: 7px;
}
.thead, .row {
	display: grid;
	grid-template-columns: 100px 154px 640px 207px 169px 271px 179px;
}
.thead {
	align-items: center;
	height: 101px;
	padding-top: 22px;
	border-bottom: 2px solid #e0e0e0;
	letter-spacing: 0.15px;
}
.hcheck {
	padding-left: 26px;
}
.hcell {
	height: 28px;
	padding-left: 19px;
	border-left: 2px solid #e0e0e0;
	line-height: 28px;
}
.tbody {
	position: relative;
	height: 1032px;
	overflow: hidden;
	letter-spacing: 0.28px;
}
.row {
	align-items: center;
	width: 1720px;
	height: 72px;
	border-bottom: 2px solid #e0e0e0;
}
.row.selected {
	background: #edf2fb;
}
.c-check {
	padding-left: 26px;
	color: #616161;
}
.c-act {
	display: flex;
	gap: 27px;
	padding-left: 24px;
	color: #757575;
}
.c-name {
	display: flex;
	align-items: center;
	gap: 7px;
	padding-left: 20px;
	white-space: nowrap;
}
.c-name span {
	padding-top: 1px;
}
.cell {
	padding: 1px 0 0 20px;
	white-space: nowrap;
}
.vscroll {
	position: absolute;
	top: 6px;
	right: 6px;
	width: 20px;
	height: 289px;
	border-radius: 10px;
	background: #ededed;
}
.hscroll {
	width: 1510px;
	height: 20px;
	margin: 6px 0 0 6px;
	border-radius: 10px;
	background: #ededed;
}
.footer {
	display: flex;
	margin: 18px -20px 0 0;
}
.chip {
	display: flex;
	align-items: center;
	height: 64px;
	border-radius: 24px;
	font-size: 26px;
	letter-spacing: 0.3px;
	white-space: nowrap;
}
.chip-selected {
	justify-content: space-between;
	width: 409px;
	padding: 0 23px 0 10px;
	background: #b3e5fc;
}
.chip-close {
	display: flex;
	align-items: center;
	justify-content: center;
	width: 74px;
	height: 64px;
	margin-left: 10px;
	border: 4px solid #64a5e3;
	border-radius: 20px;
	background: #b3e5fc;
}
.chip-stats {
	flex: 1;
	gap: 12px;
	margin-left: 23px;
	padding-left: 10px;
	background: #ececec;
}
.chip-stats .ic {
	color: #616161;
}
.splitter {
	position: absolute;
	top: 729px;
	right: 26px;
	display: flex;
	align-items: center;
	justify-content: center;
	gap: 2px;
	width: 33px;
	height: 65px;
	border-radius: 16px;
	background: #edf1f8;
}
.splitter i {
	width: 2px;
	height: 16px;
	background: #9e9e9e;
}

/* right panel */
.right {
	position: relative;
	flex: 1;
	margin-top: 64px;
	padding: 0 64px 0 39px;
}
.detail-head {
	display: flex;
	align-items: center;
	height: 73px;
	padding-left: 16px;
}
.detail-title {
	margin-left: 8px;
	width: 570px;
	color: #1565c0;
	font-weight: 700;
	letter-spacing: 0.7px;
	white-space: nowrap;
}
.detail-sep {
	width: 2px;
	height: 73px;
	background: #9dbde4;
}
.detail-head .blue {
	margin-left: 16px;
}
.next-btn {
	margin-left: auto;
	margin-right: 14px;
	padding: 5px;
	border: 2px solid #e8e8e8;
	border-radius: 16px;
}
.next-btn div {
	display: flex;
	align-items: center;
	justify-content: center;
	width: 64px;
	height: 64px;
	border-radius: 12px;
	background: #4080f0;
	color: #fff;
}
.tabs {
	display: flex;
	gap: 32px;
	height: 79px;
	border-bottom: 2px solid #e4e4ea;
	color: #6c757d;
	letter-spacing: 0.7px;
}
.tab {
	display: flex;
	align-items: center;
	gap: 16px;
	height: 79px;
	padding: 0 16px 4px;
	border-bottom: 4px solid transparent;
}
.tab span {
	padding-top: 2px;
}
.tab.active {
	color: #4080f0;
	border-bottom-color: #4080f0;
}
.members {
	width: 925px;
	letter-spacing: 0.2px;
}
.mhead, .mrow {
	display: grid;
	grid-template-columns: 142px 501px 282px;
	align-items: center;
}
.mhead {
	height: 114px;
	padding-top: 16px;
	color: #6c757d;
	font-weight: 700;
}
.mrow {
	height: 50px;
	padding-top: 1px;
	border-bottom: 2px solid #e8e8ee;
}
.mrow.last {
	border-bottom: 0;
}
.mrow .mnum {
	padding-top: 2px;
}
.mnum {
	padding-left: 31px;
}
.mname {
	display: flex;
	align-items: center;
	margin-left: -20px;
	gap: 4px;
}
.mact-head {
	margin-left: -2px;
}
.sort {
	display: block;
	width: 16px;
	height: 16px;
	fill: none;
	color: #6c757d;
}
.mact {
	display: flex;
	gap: 12px;
	padding-left: 3px;
	color: #757575;
}
.fab {
	position: absolute;
	top: 1304px;
	left: 379px;
	display: flex;
	align-items: center;
	gap: 32px;
	width: 204px;
	height: 92px;
	padding-left: 35px;
	border: 2px solid #e2e2e2;
	border-radius: 46px;
	color: #6e6e6e;
}
```
